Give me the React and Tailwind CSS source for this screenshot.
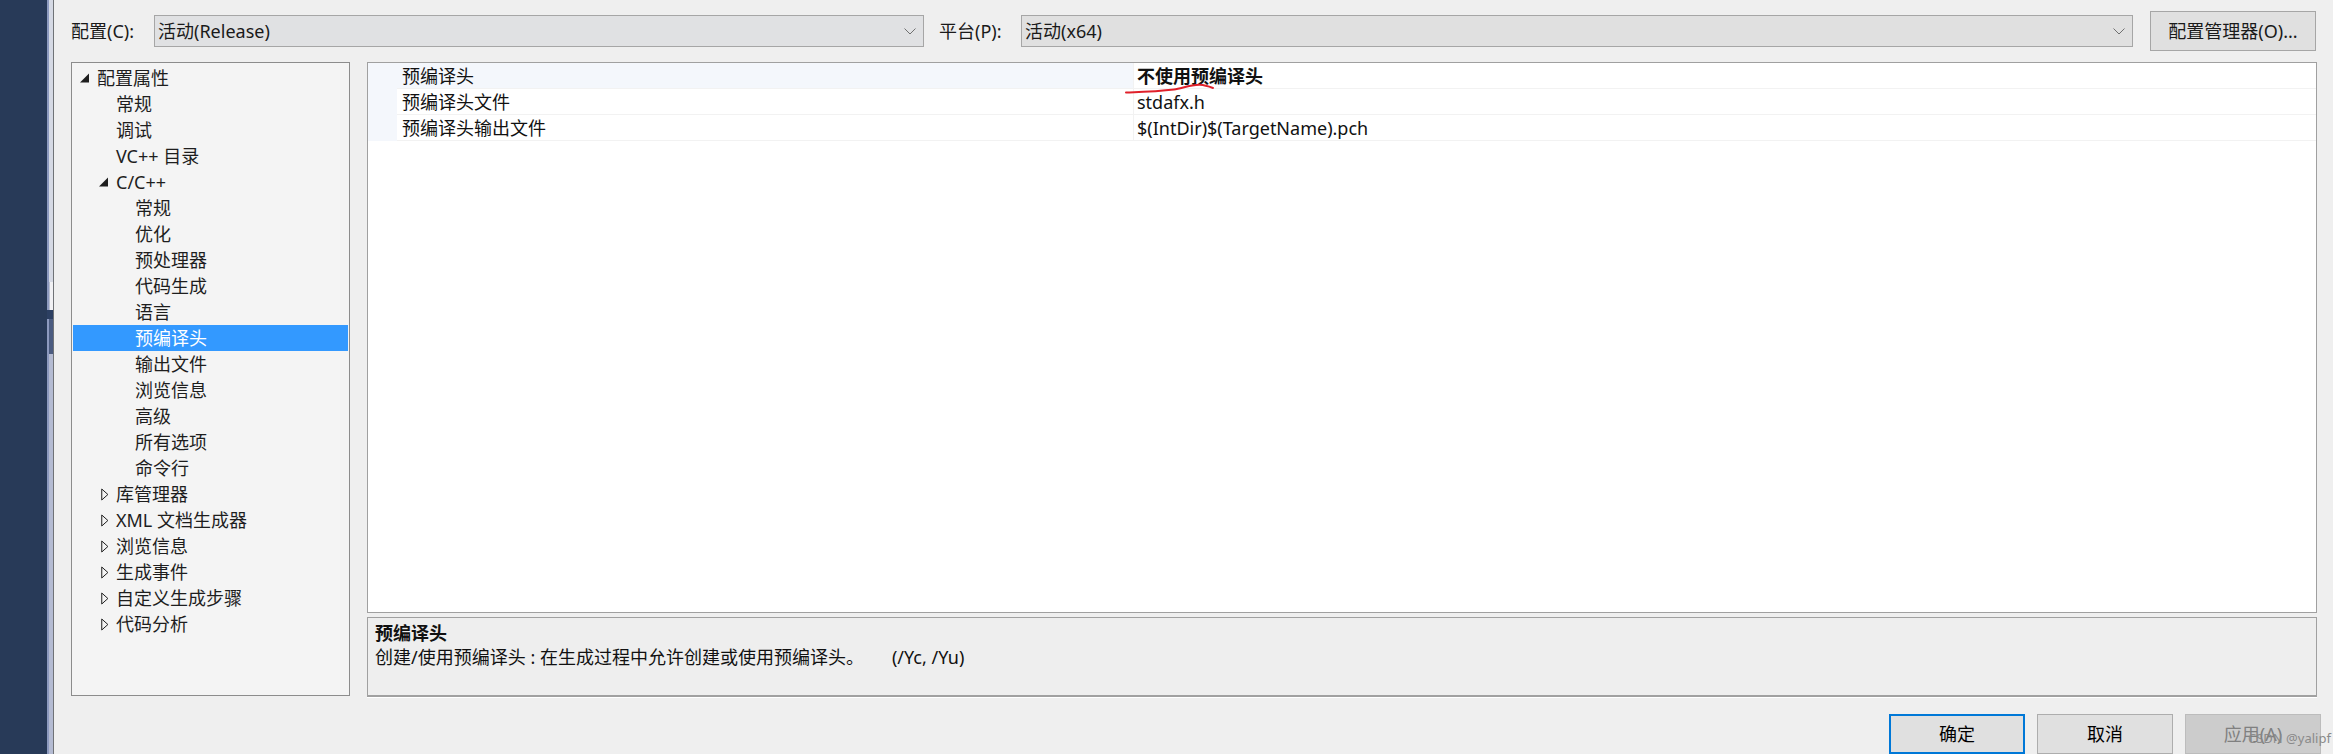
const font = "font-['Noto_Sans','Noto_Sans_CJK_SC',sans-serif]";

const treeRows = [
  { label: "配置属性", indent: 0, arrow: "open" },
  { label: "常规", indent: 1 },
  { label: "调试", indent: 1 },
  { label: "VC++ 目录", indent: 1 },
  { label: "C/C++", indent: 1, arrow: "open" },
  { label: "常规", indent: 2 },
  { label: "优化", indent: 2 },
  { label: "预处理器", indent: 2 },
  { label: "代码生成", indent: 2 },
  { label: "语言", indent: 2 },
  { label: "预编译头", indent: 2, selected: true },
  { label: "输出文件", indent: 2 },
  { label: "浏览信息", indent: 2 },
  { label: "高级", indent: 2 },
  { label: "所有选项", indent: 2 },
  { label: "命令行", indent: 2 },
  { label: "库管理器", indent: 1, arrow: "closed" },
  { label: "XML 文档生成器", indent: 1, arrow: "closed" },
  { label: "浏览信息", indent: 1, arrow: "closed" },
  { label: "生成事件", indent: 1, arrow: "closed" },
  { label: "自定义生成步骤", indent: 1, arrow: "closed" },
  { label: "代码分析", indent: 1, arrow: "closed" },
];

const gridRows = [
  { name: "预编译头", value: "不使用预编译头", bold: true },
  { name: "预编译头文件", value: "stdafx.h" },
  { name: "预编译头输出文件", value: "$(IntDir)$(TargetName).pch" },
];

function Arrow({ type }) {
  if (type === "open") {
    return (
      <svg width="10" height="10" viewBox="0 0 10 10" className="block">
        <path d="M9 0.5V9.5H0Z" fill="#1e1e1e" />
      </svg>
    );
  }
  return (
    <svg width="8" height="13" viewBox="0 0 8 13" className="block">
      <path d="M0.75 1V12L6.9 6.5Z" fill="none" stroke="#1e1e1e" strokeWidth="1" />
    </svg>
  );
}

function Chevron() {
  return (
    <svg width="12" height="7" viewBox="0 0 12 7" className="block">
      <path d="M0.5 0.5L6 6L11.5 0.5" fill="none" stroke="#707070" strokeWidth="1" />
    </svg>
  );
}

function Combo({ text, className, bg }) {
  return (
    <div className={`h-[32px] flex items-center justify-between pl-[3px] pr-[7px] border border-[#a6a6a6] text-[18px] text-[#1a1a1a] ${bg} ${className}`}>
      <span>{text}</span>
      <Chevron />
    </div>
  );
}

function TreeRow({ row }) {
  const pad = ["pl-[7px]", "pl-[26px]", "pl-[45px]"][row.indent];
  return (
    <div className={`h-[26px] flex items-center text-[18px] ${pad} ${row.selected ? "bg-[#3399ff] text-white" : "text-[#1e1e1e]"}`}>
      <span className="w-[10px] flex justify-end">{row.arrow && <Arrow type={row.arrow} />}</span>
      <span className="ml-[7px]">{row.label}</span>
    </div>
  );
}

function GridRow({ row }) {
  return (
    <div className="h-[26px] flex text-[18px] text-[#111111]">
      <div className="w-[29px] bg-[#f4f7fc]" />
      <div className={`w-[736px] pl-[5px] pt-[1px] flex items-center border-b border-[#f2f2f2] ${row.bold ? "bg-[#f4f7fc]" : ""}`}>{row.name}</div>
      <div className={`flex-1 pl-[3px] pt-[1px] flex items-center border-b border-l border-[#f2f2f2] ${row.bold ? "font-bold" : ""}`}>{row.value}</div>
    </div>
  );
}

function Btn({ children, className }) {
  return (
    <button className={`w-[136px] h-[40px] flex items-center justify-center text-[18px] ${className}`}>
      {children}
    </button>
  );
}

// the window behind the dialog, only its edge shows
function BackStrip() {
  return (
    <div className="w-[7px] flex flex-col border-r border-[#6f7276]">
      <div className="h-[282px] flex">
        <div className="w-[2px] bg-[#8d9abf]" />
        <div className="flex-1 bg-[#d5d9e4]" />
      </div>
      <div className="h-[28px] flex">
        <div className="w-[2px] bg-[#8d9abf]" />
        <div className="flex-1 bg-[#f1f1f4] border-l border-[#b9bfd2]" />
      </div>
      <div className="h-[9px] bg-[#2c3f62]" />
      <div className="h-[35px] flex">
        <div className="w-[2px] bg-[#8d9abf]" />
        <div className="flex-1 bg-[#4b5b80]" />
      </div>
      <div className="flex-1 flex">
        <div className="w-[2px] bg-[#8d9abf]" />
        <div className="flex-1 bg-[#b4bbd2]" />
      </div>
    </div>
  );
}

export default function App() {
  return (
    <div className={`relative w-[2333px] h-[754px] overflow-hidden flex bg-[#efefef] leading-none ${font}`}>
      <div className="w-[47px] bg-[#283a58]" />
      <BackStrip />

      <div className="flex-1 flex flex-col">
        <div className="h-[62px] flex items-start pt-[15px] pl-[17px]">
          <span className="w-[83px] h-[32px] flex items-center text-[18px] text-[#1a1a1a]">配置(C):</span>
          <Combo text="活动(Release)" className="w-[770px]" bg="bg-[#e0e1e3]" />
          <span className="w-[97px] h-[32px] pl-[15px] flex items-center text-[18px] text-[#1a1a1a]">平台(P):</span>
          <Combo text="活动(x64)" className="w-[1112px]" bg="bg-[#e0e0e0]" />
          <button className="ml-[17px] -mt-[4px] w-[166px] h-[40px] flex items-center justify-center border border-[#a6a6a6] bg-[#e0e0e0] text-[18px] text-[#1a1a1a]">
            配置管理器(O)...
          </button>
        </div>

        <div className="flex pl-[17px]">
          <div className="w-[279px] h-[634px] border border-[#8c8c8c] bg-[#f4f4f4] pt-[2px] px-[1px]">
            {treeRows.map((row, i) => (
              <TreeRow key={i} row={row} />
            ))}
          </div>

          <div className="ml-[17px] w-[1950px] flex flex-col">
            <div className="h-[551px] border border-[#a0a0a0] bg-white">
              {gridRows.map((row) => (
                <GridRow key={row.name} row={row} />
              ))}
            </div>
            <div className="mt-[4px] h-[80px] border border-[#a0a0a0] border-b-[2px] bg-[#eeeeee] shadow-[0_1px_0_#ffffff] pl-[7px] pt-[3px] text-[#111111]">
              <div className="h-[24px] flex items-center text-[18px] font-bold">预编译头</div>
              <div className="h-[24px] flex items-center text-[18px] whitespace-pre">
                创建/使用预编译头 : 在生成过程中允许创建或使用预编译头。      (/Yc, /Yu)
              </div>
            </div>
          </div>
        </div>

        <div className="flex justify-end gap-[12px] mt-[17px] pr-[12px]">
          <Btn className="border-[2px] border-[#0078d7] bg-[#e0e0e0] text-black">确定</Btn>
          <Btn className="border border-[#adadad] bg-[#e0e0e0] text-black">取消</Btn>
          <Btn className="relative border border-[#bcbcbc] bg-[#cccccc] text-[#808080]">
            应用(A)
            <span className="absolute left-[62px] top-[17px] whitespace-nowrap text-[13px] text-[#8a8a8a]">CSDN @yalipf</span>
          </Btn>
        </div>
      </div>

      {/* red pen mark under the value */}
      <svg width="92" height="14" viewBox="0 0 92 14" className="absolute left-[1124px] top-[82px]">
        <path d="M2 10.5C16 10 34 9.5 50 7.5C58 6.5 66 2.5 76 2.8C81 3 85 4.5 89 6" fill="none" stroke="#e0202a" strokeWidth="2" strokeLinecap="round" />
      </svg>
    </div>
  );
}
